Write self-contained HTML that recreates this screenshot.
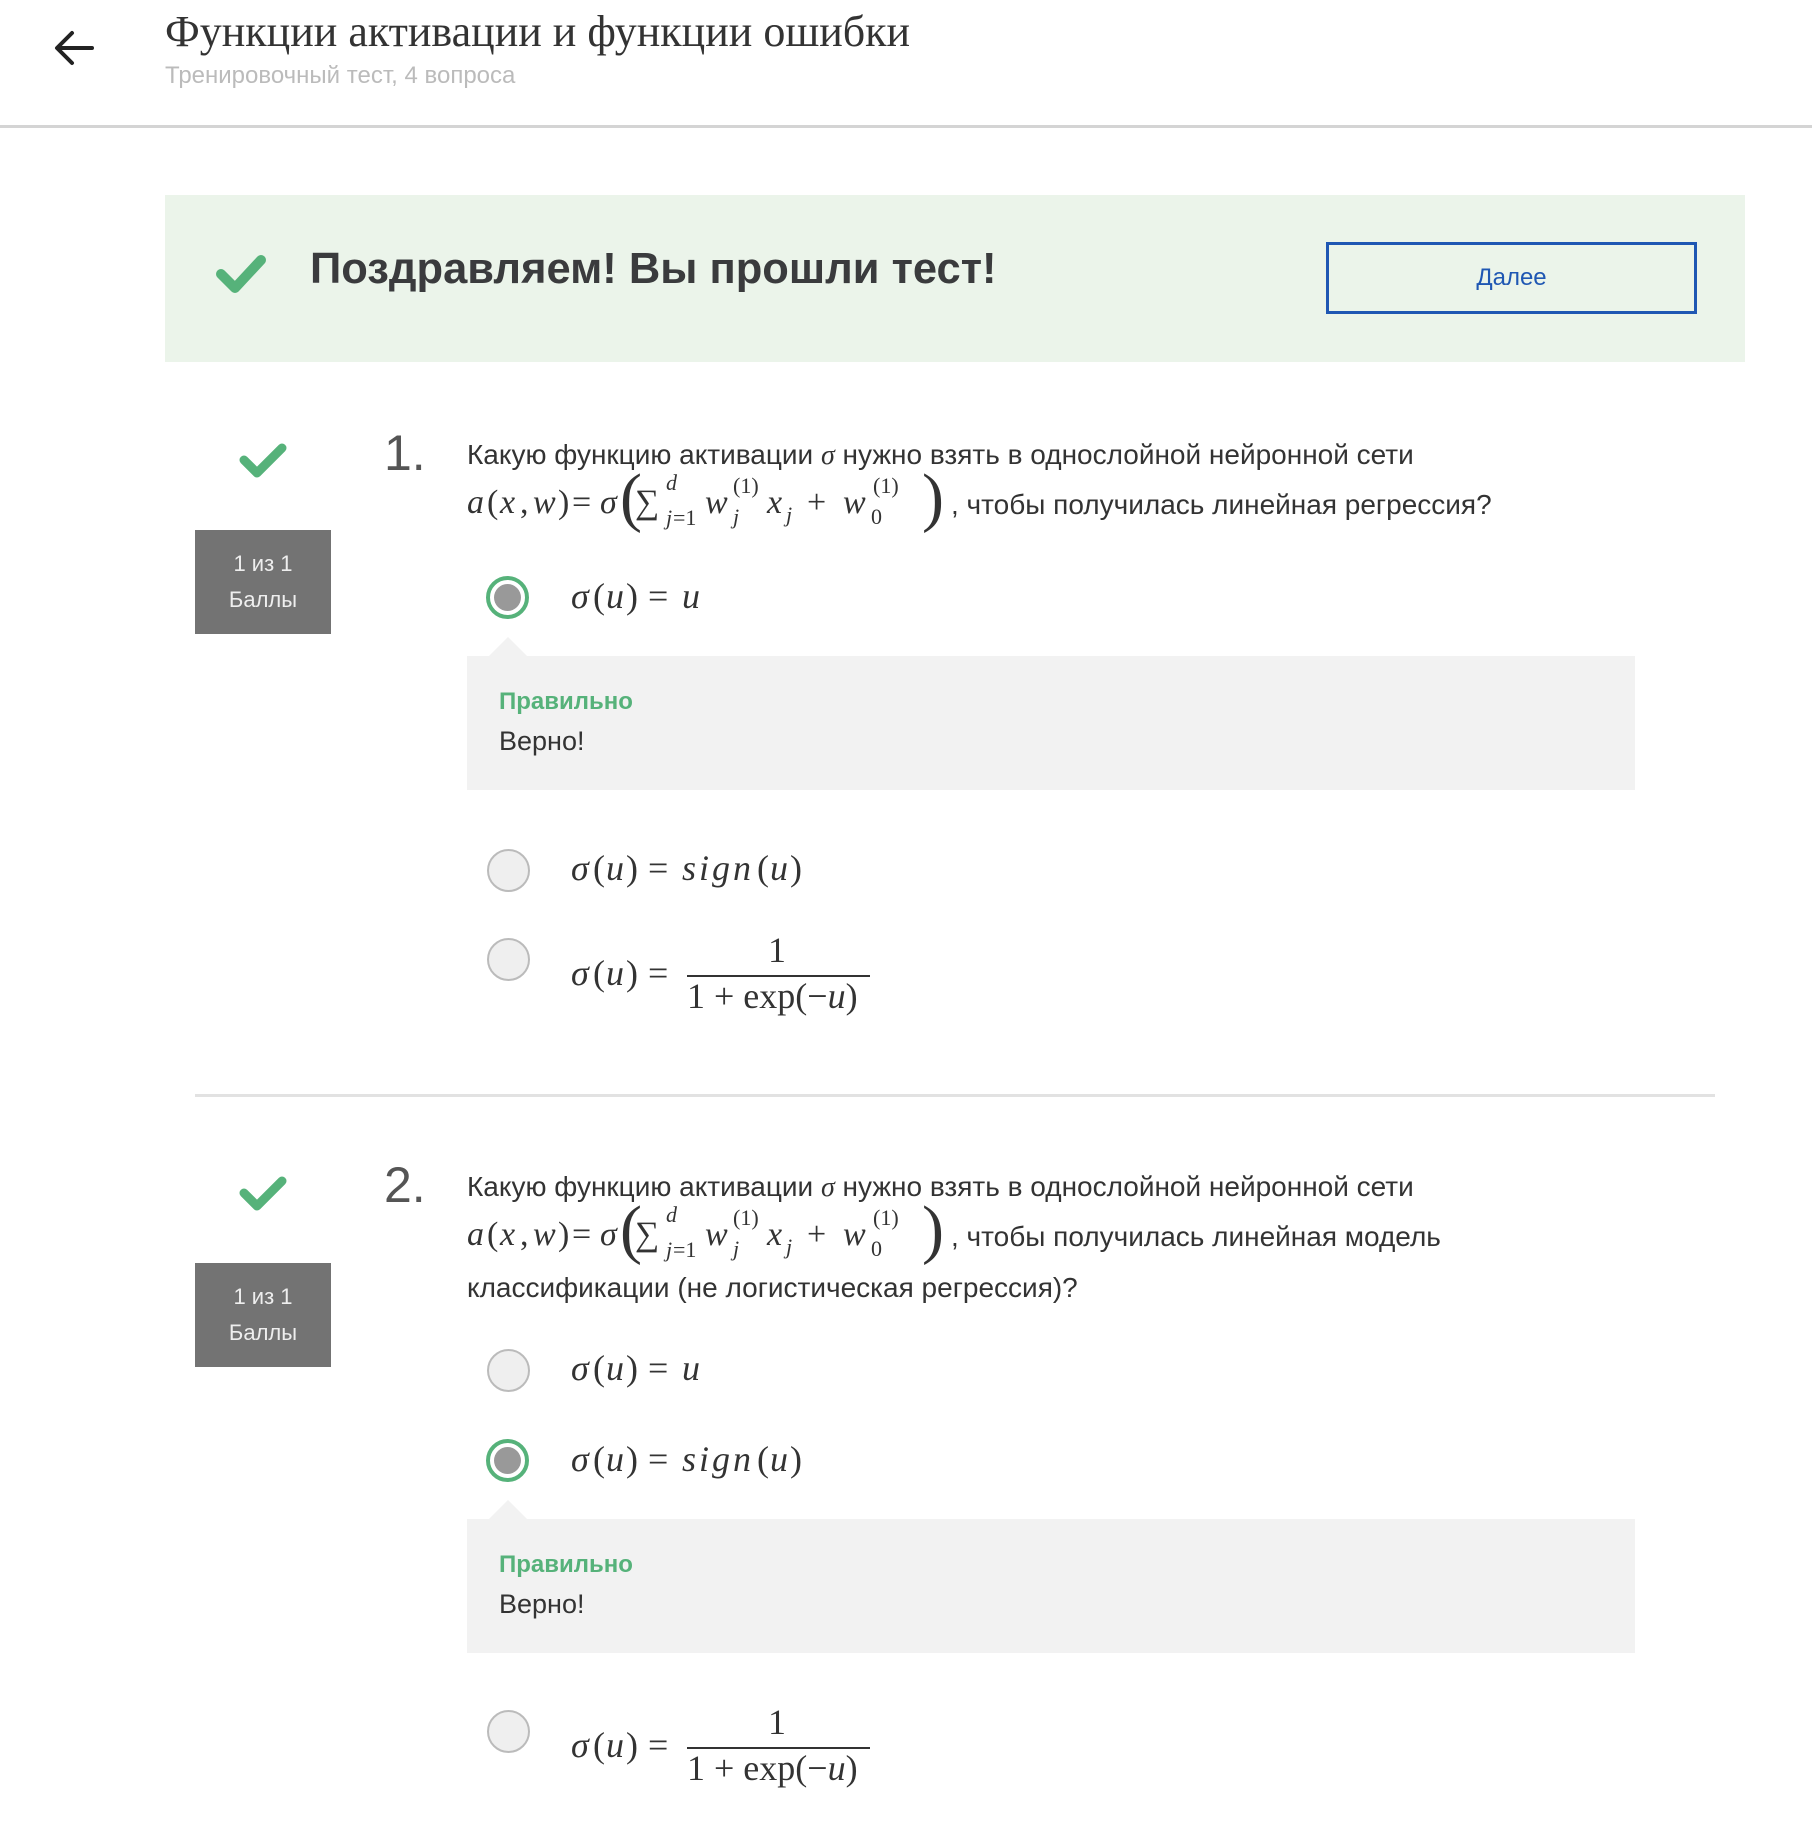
<!DOCTYPE html>
<html><head><meta charset="utf-8">
<style>
*{margin:0;padding:0;box-sizing:border-box}
body{width:1812px;height:1848px;background:#fff;position:relative;overflow:hidden;font-family:"Liberation Sans","Noto Sans CJK SC",sans-serif;color:#333}
.abs{position:absolute;white-space:nowrap}
.box{position:absolute}
.box span{position:absolute;white-space:nowrap;line-height:1}
.m{font-family:"Liberation Serif","DejaVu Serif",serif;font-style:italic}
.r{font-family:"Liberation Serif","DejaVu Serif",serif;font-style:normal}
.q{font-size:28px;color:#333;line-height:32px}
.radio{position:absolute;width:43px;height:43px;border-radius:50%;border:2px solid #bbb;background:#efefef}
.radio.sel{border:4px solid #56b27a;background:#fff}
.radio.sel::after{content:"";position:absolute;left:4px;top:4px;width:27px;height:27px;border-radius:50%;background:#999}
.fb{position:absolute;left:467px;width:1168px;height:134px;background:#f2f2f2}
.fb::before{content:"";position:absolute;left:22px;top:-19px;border-left:19px solid transparent;border-right:19px solid transparent;border-bottom:19px solid #f2f2f2}
.fb .t1{position:absolute;left:32px;top:32px;font-size:24px;font-weight:bold;color:#56b27a}
.fb .t2{position:absolute;left:32px;top:70px;font-size:27px;color:#333}
.score{position:absolute;left:195px;width:136px;height:104px;background:#737373;color:#eee;font-size:22px;text-align:center;line-height:36px;padding-top:16px}
.num{position:absolute;left:384px;font-size:50px;color:#555}
.o{font-size:36px}
.s{font-size:22px}
</style></head><body>

<svg class="abs" style="left:50px;top:28px" width="46" height="40" viewBox="0 0 46 40"><path d="M42 20H8M22 5L7 20l15 15" fill="none" stroke="#222" stroke-width="4" stroke-linecap="round" stroke-linejoin="round"/></svg>
<div class="abs" style="left:165px;top:6px;font-family:'Liberation Serif',serif;font-size:44px;color:#333">Функции активации и функции ошибки</div>
<div class="abs" style="left:165px;top:62px;font-size:24px;color:#bbb">Тренировочный тест, 4 вопроса</div>
<div class="abs" style="left:0;top:125px;width:1812px;height:3px;background:#d4d4d4"></div>

<div class="abs" style="left:165px;top:195px;width:1580px;height:167px;background:#ebf4ea"></div>
<svg class="abs" style="left:215px;top:252px" width="52" height="42" viewBox="0 0 52 42"><path d="M6 22l14 14L46 8" fill="none" stroke="#56b27a" stroke-width="10" stroke-linecap="round" stroke-linejoin="round"/></svg>
<div class="abs" style="left:310px;top:245px;font-size:43.5px;font-weight:bold;color:#3a3b3d">Поздравляем! Вы прошли тест!</div>
<div class="abs" style="left:1326px;top:242px;width:371px;height:72px;border:3px solid #1f57b3;color:#1f57b3;font-size:24px;text-align:center;line-height:66px">Далее</div>

<!-- Q1 -->
<svg class="abs" style="left:238px;top:440px" width="50" height="40" viewBox="0 0 50 40"><path d="M6 20l13 13L44 8" fill="none" stroke="#56b27a" stroke-width="9" stroke-linecap="round" stroke-linejoin="round"/></svg>
<div class="score" style="top:530px">1 из 1<br>Баллы</div>
<div class="num" style="top:424px">1.</div>
<div class="abs q" style="left:467px;top:439px">Какую функцию активации <span class="m">σ</span> нужно взять в однослойной нейронной сети</div>
<div class="box" style="left:467px;top:470px">
<span class="m" style="left:0;top:16px;font-size:34px">a</span><span class="r" style="left:20px;top:16px;font-size:34px">(</span><span class="m" style="left:33px;top:16px;font-size:34px">x</span><span class="r" style="left:53px;top:16px;font-size:34px">,</span><span class="m" style="left:66px;top:16px;font-size:34px">w</span><span class="r" style="left:91px;top:16px;font-size:34px">)</span><span class="r" style="left:105px;top:16px;font-size:34px">=</span><span class="m" style="left:133px;top:16px;font-size:34px">σ</span><span class="r" style="left:153px;top:-5px;font-size:66px">(</span><span class="r" style="left:168px;top:16px;font-size:34px">∑</span><span class="m s" style="left:199px;top:2px">d</span><span class="m s" style="left:199px;top:37px">j</span><span class="r s" style="left:206px;top:37px">=1</span><span class="m" style="left:238px;top:16px;font-size:34px">w</span><span class="r s" style="left:266px;top:5px">(1)</span><span class="m s" style="left:266px;top:36px">j</span><span class="m" style="left:300px;top:16px;font-size:34px">x</span><span class="m s" style="left:319px;top:34px">j</span><span class="r" style="left:340px;top:16px;font-size:34px">+</span><span class="m" style="left:376px;top:16px;font-size:34px">w</span><span class="r s" style="left:406px;top:5px">(1)</span><span class="r s" style="left:404px;top:36px">0</span><span class="r" style="left:455px;top:-5px;font-size:66px">)</span>
<span class="q" style="left:484px;top:21px;font-family:'Liberation Sans',sans-serif">, чтобы получилась линейная регрессия?</span>
</div>

<div class="radio sel" style="left:486px;top:576px"></div>
<div class="box o" style="left:571px;top:578px"><span class="m" style="left:0">σ</span><span class="r" style="left:22px">(</span><span class="m" style="left:35px">u</span><span class="r" style="left:55px">)</span><span class="r" style="left:77px">=</span><span class="m" style="left:111px">u</span></div>
<div class="fb" style="top:656px"><div class="t1">Правильно</div><div class="t2">Верно!</div></div>

<div class="radio" style="left:487px;top:849px"></div>
<div class="box o" style="left:571px;top:850px"><span class="m" style="left:0">σ</span><span class="r" style="left:22px">(</span><span class="m" style="left:35px">u</span><span class="r" style="left:55px">)</span><span class="r" style="left:77px">=</span><span class="m" style="left:111px;letter-spacing:3px">sign</span><span class="r" style="left:186px">(</span><span class="m" style="left:199px">u</span><span class="r" style="left:219px">)</span></div>
<div class="radio" style="left:487px;top:938px"></div>
<div class="box o" style="left:571px;top:930px"><span class="m" style="left:0;top:25px">σ</span><span class="r" style="left:22px;top:25px">(</span><span class="m" style="left:35px;top:25px">u</span><span class="r" style="left:55px;top:25px">)</span><span class="r" style="left:77px;top:25px">=</span><span class="r" style="left:197px;top:2px">1</span><span style="left:116px;top:45px;width:183px;height:2px;background:#333"></span><span class="r" style="left:116px;top:48px">1 + exp(−<i class="m">u</i>)</span></div>

<div class="abs" style="left:195px;top:1094px;width:1520px;height:3px;background:#e2e2e2"></div>

<!-- Q2 -->
<svg class="abs" style="left:238px;top:1173px" width="50" height="40" viewBox="0 0 50 40"><path d="M6 20l13 13L44 8" fill="none" stroke="#56b27a" stroke-width="9" stroke-linecap="round" stroke-linejoin="round"/></svg>
<div class="score" style="top:1263px">1 из 1<br>Баллы</div>
<div class="num" style="top:1156px">2.</div>
<div class="abs q" style="left:467px;top:1171px">Какую функцию активации <span class="m">σ</span> нужно взять в однослойной нейронной сети</div>
<div class="box" style="left:467px;top:1202px">
<span class="m" style="left:0;top:16px;font-size:34px">a</span><span class="r" style="left:20px;top:16px;font-size:34px">(</span><span class="m" style="left:33px;top:16px;font-size:34px">x</span><span class="r" style="left:53px;top:16px;font-size:34px">,</span><span class="m" style="left:66px;top:16px;font-size:34px">w</span><span class="r" style="left:91px;top:16px;font-size:34px">)</span><span class="r" style="left:105px;top:16px;font-size:34px">=</span><span class="m" style="left:133px;top:16px;font-size:34px">σ</span><span class="r" style="left:153px;top:-5px;font-size:66px">(</span><span class="r" style="left:168px;top:16px;font-size:34px">∑</span><span class="m s" style="left:199px;top:2px">d</span><span class="m s" style="left:199px;top:37px">j</span><span class="r s" style="left:206px;top:37px">=1</span><span class="m" style="left:238px;top:16px;font-size:34px">w</span><span class="r s" style="left:266px;top:5px">(1)</span><span class="m s" style="left:266px;top:36px">j</span><span class="m" style="left:300px;top:16px;font-size:34px">x</span><span class="m s" style="left:319px;top:34px">j</span><span class="r" style="left:340px;top:16px;font-size:34px">+</span><span class="m" style="left:376px;top:16px;font-size:34px">w</span><span class="r s" style="left:406px;top:5px">(1)</span><span class="r s" style="left:404px;top:36px">0</span><span class="r" style="left:455px;top:-5px;font-size:66px">)</span>
<span class="q" style="left:484px;top:21px;font-family:'Liberation Sans',sans-serif">, чтобы получилась линейная модель</span>
</div>
<div class="abs q" style="left:467px;top:1272px">классификации (не логистическая регрессия)?</div>

<div class="radio" style="left:487px;top:1349px"></div>
<div class="box o" style="left:571px;top:1350px"><span class="m" style="left:0">σ</span><span class="r" style="left:22px">(</span><span class="m" style="left:35px">u</span><span class="r" style="left:55px">)</span><span class="r" style="left:77px">=</span><span class="m" style="left:111px">u</span></div>
<div class="radio sel" style="left:486px;top:1439px"></div>
<div class="box o" style="left:571px;top:1441px"><span class="m" style="left:0">σ</span><span class="r" style="left:22px">(</span><span class="m" style="left:35px">u</span><span class="r" style="left:55px">)</span><span class="r" style="left:77px">=</span><span class="m" style="left:111px;letter-spacing:3px">sign</span><span class="r" style="left:186px">(</span><span class="m" style="left:199px">u</span><span class="r" style="left:219px">)</span></div>
<div class="fb" style="top:1519px"><div class="t1">Правильно</div><div class="t2">Верно!</div></div>

<div class="radio" style="left:487px;top:1710px"></div>
<div class="box o" style="left:571px;top:1702px"><span class="m" style="left:0;top:25px">σ</span><span class="r" style="left:22px;top:25px">(</span><span class="m" style="left:35px;top:25px">u</span><span class="r" style="left:55px;top:25px">)</span><span class="r" style="left:77px;top:25px">=</span><span class="r" style="left:197px;top:2px">1</span><span style="left:116px;top:45px;width:183px;height:2px;background:#333"></span><span class="r" style="left:116px;top:48px">1 + exp(−<i class="m">u</i>)</span></div>

</body></html>
